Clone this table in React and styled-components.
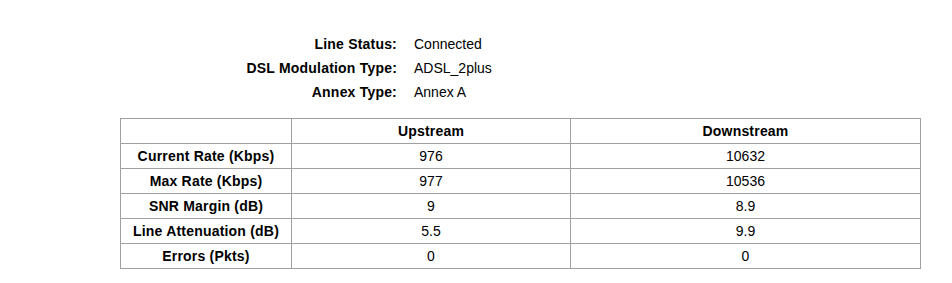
import React from "react";
import styled, { createGlobalStyle } from "styled-components";

const Global = createGlobalStyle`
  html, body { margin: 0; padding: 0; background: #fff; }
  body { font-family: "Liberation Sans", Arial, sans-serif; font-size: 14px; color: #000; }
`;

const Page = styled.div`
  width: 952px;
  padding-top: 32px;
`;

const InfoGrid = styled.div`
  display: grid;
  grid-template-columns: 397px auto;
  column-gap: 17px;
  grid-auto-rows: 24px;
  align-items: center;
`;

const Label = styled.div`
  font-weight: bold;
  letter-spacing: 0.2px;
  text-align: right;
`;

const Value = styled.div``;

const StatsTable = styled.div`
  margin: 14px 0 0 120px;
  display: grid;
  grid-template-columns: 171px 279px 350px;
  width: 801px;
  box-sizing: border-box;
  border-top: 1px solid #a0a0a0;
  border-left: 1px solid #a0a0a0;
`;

const Cell = styled.div`
  box-sizing: border-box;
  height: 25px;
  border-right: 1px solid #a0a0a0;
  border-bottom: 1px solid #a0a0a0;
  display: flex;
  align-items: center;
  justify-content: center;
  font-weight: ${(p) => (p.$head ? "bold" : "normal")};
  letter-spacing: ${(p) => (p.$head ? "0.2px" : "normal")};
`;

const info = [
  ["Line Status:", "Connected"],
  ["DSL Modulation Type:", "ADSL_2plus"],
  ["Annex Type:", "Annex A"],
];

const rows = [
  ["Current Rate (Kbps)", "976", "10632"],
  ["Max Rate (Kbps)", "977", "10536"],
  ["SNR Margin (dB)", "9", "8.9"],
  ["Line Attenuation (dB)", "5.5", "9.9"],
  ["Errors (Pkts)", "0", "0"],
];

export default function App() {
  return (
    <Page>
      <Global />
      <InfoGrid>
        {info.map(([l, v]) => (
          <React.Fragment key={l}>
            <Label>{l}</Label>
            <Value>{v}</Value>
          </React.Fragment>
        ))}
      </InfoGrid>
      <StatsTable>
        <Cell $head />
        <Cell $head>Upstream</Cell>
        <Cell $head>Downstream</Cell>
        {rows.map(([l, u, d]) => (
          <React.Fragment key={l}>
            <Cell $head>{l}</Cell>
            <Cell>{u}</Cell>
            <Cell>{d}</Cell>
          </React.Fragment>
        ))}
      </StatsTable>
    </Page>
  );
}
